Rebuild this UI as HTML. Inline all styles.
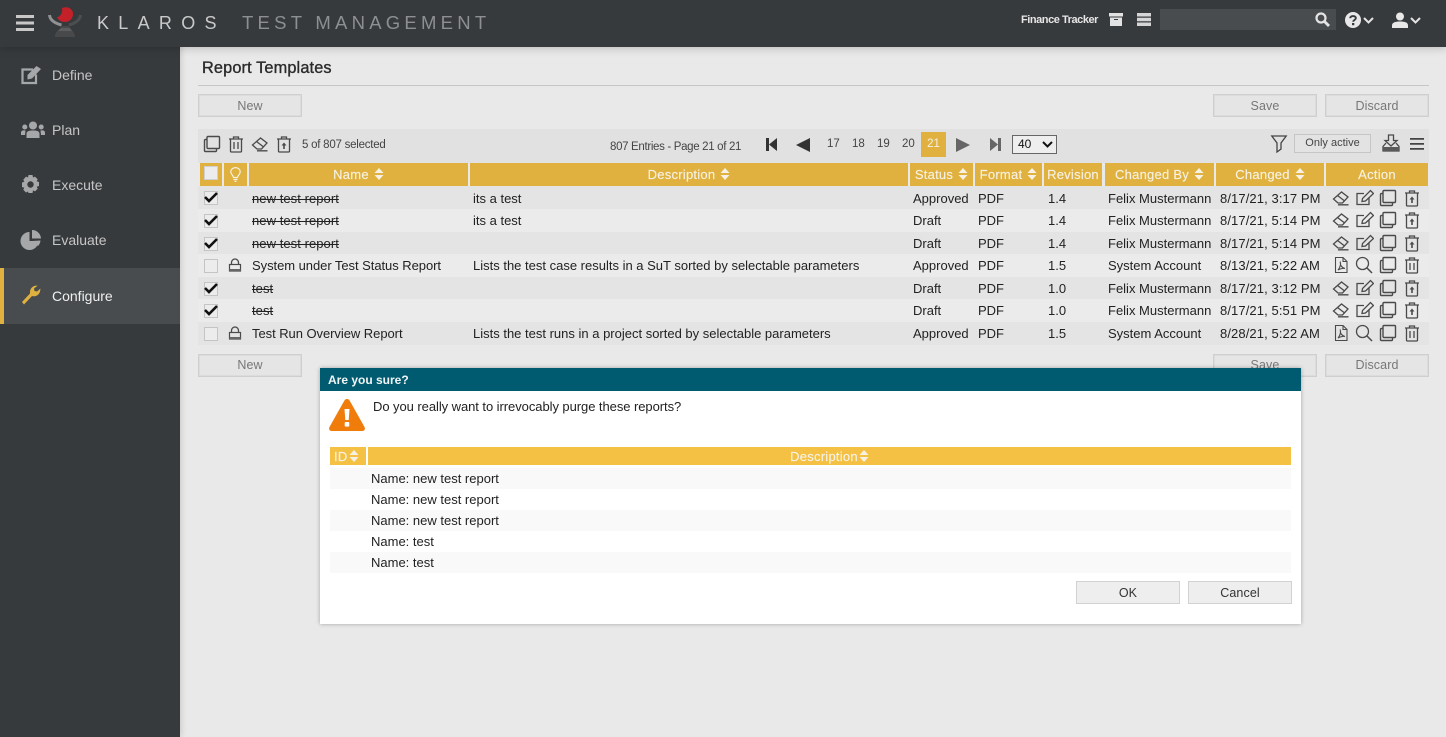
<!DOCTYPE html>
<html lang="en"><head><meta charset="utf-8"><title>Report Templates</title>
<style>
*{box-sizing:border-box}
html,body{margin:0;padding:0;width:1446px;height:737px;overflow:hidden;background:#e9e9e9;font-family:"Liberation Sans",sans-serif;font-size:13px;color:#222}
.a{position:absolute;white-space:nowrap}
svg.a{overflow:visible}
.side{font-size:14px;color:#c6c6c6;left:52px;line-height:18px}
.btn{position:absolute;width:104px;height:23px;background:#e5e5e5;border:1px solid #cfcfcf;color:#777;text-align:center;line-height:22px;font-size:12.5px;letter-spacing:.1px;box-shadow:inset 0 0 0 1px #dcdcdc}
.hd{position:absolute;top:163px;height:23px;background:#e0b13e;color:#f6f1e2;font-size:13px;line-height:23px;text-align:center;letter-spacing:.25px;white-space:nowrap;-webkit-text-stroke:.15px #f6f1e2}
.sort{display:inline-block;width:10px;height:12px;margin-left:5px;vertical-align:-1px}
.r{position:absolute;left:198px;width:1231px;height:23px;line-height:23px;white-space:nowrap}
.d{background:#e4e4e4}.l{background:#ebebeb}
.r span{position:absolute;top:0;letter-spacing:0}
.r1 span{top:1px}
.r .n{left:54px;letter-spacing:-.05px}.de{left:275px}.st{left:715px}.fo{left:780px}.re{left:850px}.cb{left:910px}.r .ch{left:1022px;letter-spacing:.1px}
.r .s{text-decoration:line-through;text-decoration-thickness:1px;letter-spacing:.06px}
.box{position:absolute;left:6px;top:5px;width:14px;height:14px;border:1px solid #c4c4c4;background:#ececec}
.r svg{position:absolute;top:2px;width:18px;height:18px;fill:none}
.r1 svg{top:3px}
.r svg.k{left:6px;top:5px;width:14px;height:14px}
.r svg.lock{left:30px;top:4px;width:14px;height:14px}
.pg{position:absolute;top:137px;font-size:11.5px;color:#444;line-height:14px}
.dr{position:absolute;left:330px;width:962px;height:21px;line-height:21px;padding-left:41px;font-size:13px}
</style></head><body>
<svg width="0" height="0" style="position:absolute"><defs>
<symbol id="er" viewBox="0 0 18 18"><path d="M1.500 10 9.500 3 16 8 10.500 14H6Z M5.500 6.500 12 11.500 M6 15.800H16.500" fill="none" stroke="#4a4a4a" stroke-width="1.300"/></symbol>
<symbol id="ed" viewBox="0 0 18 18"><path d="M8 4.500H1V15.500H13V9 M6 12.500 6.500 9.500 14.500 1.500 17.500 4.500 9.500 12Z" fill="none" stroke="#4a4a4a" stroke-width="1.300"/></symbol>
<symbol id="co" viewBox="0 0 18 18"><path d="M5 1.500H15.500A1 1 0 0 1 16.500 2.500V12.500A1 1 0 0 1 15.500 13.500H5A1 1 0 0 1 4 12.500V2.500A1 1 0 0 1 5 1.500Z M4 4.500H2.500A1 1 0 0 0 1.500 5.500V15.500A1 1 0 0 0 2.500 16.500H12.500A1 1 0 0 0 13.500 15.500V13.500" fill="none" stroke="#4a4a4a" stroke-width="1.400"/></symbol>
<symbol id="up" viewBox="0 0 18 18"><path d="M3.500 4.500V16A1 1 0 0 0 4.500 17H13.500A1 1 0 0 0 14.500 16V4.500 M2 4H16 M6.500 4V2H11.500V4" fill="none" stroke="#4a4a4a" stroke-width="1.300"/><path d="M9 7.500 11.500 10.500H9.800V14H8.200V10.500H6.500Z" fill="#4a4a4a"/></symbol>
<symbol id="tr" viewBox="0 0 18 18"><path d="M3.500 4.500V16A1 1 0 0 0 4.500 17H13.500A1 1 0 0 0 14.500 16V4.500 M2 4H16 M6.500 4V2H11.500V4 M7 7V14 M11 7V14" fill="none" stroke="#4a4a4a" stroke-width="1.300"/></symbol>
<symbol id="pd" viewBox="0 0 18 18"><path d="M3.500 1.500H11L15 5.500V16.500H3.500Z M11 1.500V5.500H15 M6 14C8 12 9 8 8.300 6.500C8 9 10 12 13 12.500C10.500 12 8 13 6 14Z" fill="none" stroke="#4a4a4a" stroke-width="1.100"/></symbol>
<symbol id="se" viewBox="0 0 18 18"><circle cx="7.500" cy="7.500" r="6" fill="none" stroke="#4a4a4a" stroke-width="1.300"/><path d="M12 12 17 17" fill="none" stroke="#4a4a4a" stroke-width="1.500"/></symbol>
<symbol id="ck" viewBox="0 0 14 14"><path d="M1 6 5 10 13 2" fill="none" stroke="#111" stroke-width="2.600"/></symbol>
<symbol id="lk" viewBox="0 0 14 14"><path d="M3.500 7V4.500A3.500 3.500 0 0 1 10.500 4.500V7" fill="none" stroke="#4a4a4a" stroke-width="1.300"/><rect x="1.500" y="6.500" width="11" height="6.500" fill="none" stroke="#4a4a4a" stroke-width="1.200"/><rect x="1.500" y="11" width="11" height="2" fill="#666"/></symbol>
<symbol id="so" viewBox="0 0 9 12"><path d="M4.500 0 9 5H0ZM0 7H9L4.500 12Z" fill="#f6f1e2"/></symbol>
</defs></svg>

<!-- header -->
<div class="a" style="left:0;top:0;width:1446px;height:47px;background:#373a3d;box-shadow:0 2px 8px rgba(0,0,0,.18);z-index:2"></div>
<div style="position:absolute;left:0;top:0;width:1446px;height:47px;z-index:3">
<svg class="a" style="left:16px;top:15px" width="18" height="16"><path d="M0 0h18v3H0zM0 6.500h18v3H0zM0 13h18v3H0z" fill="#c8c8c8"/></svg>
<svg class="a" style="left:40px;top:0" width="60" height="47" viewBox="0 0 60 47">
<path d="M9.500 15C10 20 14 23 21.500 25" fill="none" stroke="#8f9192" stroke-width="3"/><path d="M40.500 15C40 20 36 23 29 25" fill="none" stroke="#4c4e50" stroke-width="3"/>
<path d="M22 26H29C30 30 35 31 35 37H15C15 31 20 30 22 26Z" fill="#48494b"/><path d="M21 28H30L32 31H18Z" fill="#5c5e60"/>
<path d="M22 8C27 6 33 8 33 14C33 19 29 22 25 22C21 22 18 20 17 17C20 17 23 13 22 8Z" fill="#c3202a"/></svg>
<div class="a" style="left:97px;top:12px;font-size:18px;line-height:22px;color:#c9c9c9;letter-spacing:9.300px">KLAROS</div>
<div class="a" style="left:242px;top:12px;font-size:18.500px;line-height:22px;color:#8d8f90;letter-spacing:4.250px">TEST MANAGEMENT</div>
<div class="a" style="left:1021px;top:13px;font-size:11px;line-height:14px;color:#e6e6e6;font-weight:bold;letter-spacing:-.45px">Finance Tracker</div>
<svg class="a" style="left:1109px;top:13px" width="14" height="13"><path d="M0 0h14v3.500H0zM1 4.500h12V13H1z" fill="#e2e2e2"/><path d="M5 6.500h4" stroke="#373a3d"/></svg>
<svg class="a" style="left:1137px;top:13px" width="14" height="13"><path d="M0 0h14v3.500H0zM0 4.700h14v3.600H0zM0 9.500h14V13H0z" fill="#d5d5d5"/></svg>
<div class="a" style="left:1160px;top:9px;width:176px;height:21px;background:#484c4f"></div>
<svg class="a" style="left:1315px;top:12px" width="15" height="15"><circle cx="6" cy="6" r="4.500" fill="none" stroke="#e4e4e4" stroke-width="2.200"/><path d="M9.500 9.500 14 14" stroke="#e4e4e4" stroke-width="2.800"/></svg>
<svg class="a" style="left:1345px;top:12px" width="16" height="16"><circle cx="8" cy="8" r="8" fill="#e8e8e8"/><path d="M5.200 6.200C5.400 3.300 10.800 3.300 10.800 6.200C10.800 8 8.200 8 8.200 9.700" fill="none" stroke="#373a3d" stroke-width="1.900"/><rect x="7" y="11" width="2.300" height="2.200" fill="#373a3d"/></svg>
<svg class="a" style="left:1363px;top:17px" width="11" height="7"><path d="M1 1 5.500 5.500 10 1" fill="none" stroke="#e4e4e4" stroke-width="2"/></svg>
<svg class="a" style="left:1392px;top:12px" width="16" height="16"><circle cx="8" cy="4.500" r="4" fill="#e8e8e8"/><path d="M0 16V13.500C0 10.500 3 9.500 8 9.500S16 10.500 16 13.500V16Z" fill="#e8e8e8"/></svg>
<svg class="a" style="left:1410px;top:17px" width="11" height="7"><path d="M1 1 5.500 5.500 10 1" fill="none" stroke="#e4e4e4" stroke-width="2"/></svg>
</div>

<!-- sidebar -->
<div class="a" style="left:0;top:0;width:180px;height:737px;background:#373a3d;box-shadow:1px 0 6px rgba(0,0,0,.15);z-index:1"></div>
<div style="position:absolute;left:0;top:0;width:180px;height:737px;z-index:3">
<div class="a" style="left:0;top:268px;width:180px;height:56px;background:#484c4e;border-left:4px solid #e0b13e"></div>
<svg class="a" style="left:21px;top:65px" width="22" height="20"><path d="M15 9.500V18H1.500V4.500H12" fill="none" stroke="#a6a7a9" stroke-width="2.200"/><path d="M6.500 10 15.500 1 20 4 11 13.500 6.500 14.500Z" fill="#a6a7a9"/></svg>
<svg class="a" style="left:21px;top:121px" width="24" height="18" viewBox="0 0 24 18"><circle cx="12" cy="4.500" r="4" fill="#a6a7a9"/><circle cx="3.800" cy="6" r="2.500" fill="#a6a7a9"/><circle cx="20.200" cy="6" r="2.500" fill="#a6a7a9"/><path d="M5.500 17V13C5.500 10 8 9.500 12 9.500S18.500 10 18.500 13V17ZM0 14V11.500C0 9.500 2 9 4.500 9.500L4 14ZM24 14V11.500C24 9.500 22 9 19.500 9.500L20 14Z" fill="#a6a7a9"/></svg>
<svg class="a" style="left:21px;top:175px" width="19" height="19" viewBox="0 0 19 19"><path fill-rule="evenodd" d="M7.500 0h4l.5 2.500 2-.9 2.700 2.700-1 2 2.300.7v4l-2.300.7 1 2-2.700 2.700-2-1-.5 2.600h-4L7 16.500l-2 1-2.700-2.700 1-2L1 12V7.500l2.300-.7-1-2L5 1.600l2 .9ZM9.500 6.300a3.200 3.200 0 1 0 .01 0Z" fill="#a6a7a9"/></svg>
<svg class="a" style="left:21px;top:230px" width="20" height="20" viewBox="0 0 20 20"><path d="M9 1.500V10.500H18A9 9 0 1 1 9 1.500Z" fill="#a6a7a9" transform="translate(-.5 .5)"/><path d="M11 0A9 9 0 0 1 20 8.500H11Z" fill="#a6a7a9"/><path d="M11 11 19.500 10.500A9 9 0 0 1 17 16Z" fill="#a6a7a9"/></svg>
<svg class="a" style="left:21px;top:285px" width="20" height="20" viewBox="0 0 20 20"><path d="M1 17 3 19.500 11 11C14 12 18 10.500 19 6.500L19.500 3.500 16 6.500 13.500 6 13 3.500 16.500.7C12 .3 8.500 3.500 9 8.500Z" fill="#e0b13e"/></svg>
<div class="a side" style="top:66px">Define</div>
<div class="a side" style="top:121px">Plan</div>
<div class="a side" style="top:176px">Execute</div>
<div class="a side" style="top:231px">Evaluate</div>
<div class="a side" style="top:287px;color:#f0f0f0">Configure</div>
</div>

<!-- main -->
<div class="a" style="left:202px;top:58px;font-size:16.300px;line-height:20px;color:#2b2b2b;-webkit-text-stroke:.35px #2b2b2b;letter-spacing:.15px">Report Templates</div>
<div class="a" style="left:198px;top:85px;width:1231px;height:1px;background:#c6c6c6"></div>
<div class="btn" style="left:198px;top:94px">New</div>
<div class="btn" style="left:1213px;top:94px">Save</div>
<div class="btn" style="left:1325px;top:94px">Discard</div>
<div class="btn" style="left:198px;top:354px;line-height:21px">New</div>
<div class="btn" style="left:1213px;top:354px;line-height:21px">Save</div>
<div class="btn" style="left:1325px;top:354px;line-height:21px">Discard</div>

<!-- toolbar -->
<div class="a" style="left:198px;top:129px;width:1231px;height:34px;background:#e1e1e1"></div>
<svg class="a" style="left:203px;top:135px" width="18" height="18"><use href="#co"/></svg>
<svg class="a" style="left:227px;top:135px" width="18" height="18"><use href="#tr"/></svg>
<svg class="a" style="left:251px;top:135px" width="18" height="18"><use href="#er"/></svg>
<svg class="a" style="left:275px;top:135px" width="18" height="18"><use href="#up"/></svg>
<div class="pg" style="left:302px;top:138px;letter-spacing:-.24px">5 of 807 selected</div>
<div class="pg" style="left:610px;top:140px;letter-spacing:-.33px">807 Entries - Page 21 of 21</div>
<svg class="a" style="left:766px;top:138px" width="11" height="13"><path d="M0 0h3v13H0zM11 0v13L3 6.500z" fill="#333"/></svg>
<svg class="a" style="left:796px;top:138px" width="14" height="14"><path d="M14 0v14L0 7z" fill="#333"/></svg>
<div class="pg" style="left:827px;top:137px">17</div><div class="pg" style="left:852px;top:137px">18</div>
<div class="pg" style="left:877px;top:137px">19</div><div class="pg" style="left:902px;top:137px">20</div>
<div class="a" style="left:921px;top:132px;width:25px;height:25px;background:#e0b13e;color:#f6f1e2;text-align:center;font-size:11.500px;line-height:24px">21</div>
<svg class="a" style="left:956px;top:138px" width="14" height="14"><path d="M0 0v14L14 7z" fill="#666"/></svg>
<svg class="a" style="left:990px;top:138px" width="11" height="13"><path d="M0 0v13L8 6.500zM8 0h3v13H8z" fill="#666"/></svg>
<div class="a" style="left:1012px;top:135px;width:45px;height:19px;border:1px solid #666;background:#eee;font-size:12px;line-height:17px;padding-left:5px;color:#111">40</div>
<svg class="a" style="left:1042px;top:141px" width="11" height="7"><path d="M1 1 5.500 5.500 10 1" fill="none" stroke="#111" stroke-width="2"/></svg>
<svg class="a" style="left:1271px;top:135px" width="16" height="18"><path d="M.8 1H15.200L10 8V14L6 17V8Z" fill="none" stroke="#444" stroke-width="1.300"/></svg>
<div class="a" style="left:1294px;top:134px;width:77px;height:19px;border:1px solid #c6c6c6;background:#e3e3e3;font-size:11px;line-height:17px;text-align:center;color:#444">Only active</div>
<svg class="a" style="left:1382px;top:134px" width="18" height="18"><path d="M6.500 1H11.500V6.500H15L9 12 3 6.500H6.500Z M4 9 1 12.500V17H17V12.500L14 9" fill="none" stroke="#4a4a4a" stroke-width="1.300"/><rect x="1" y="13" width="16" height="4" fill="#5a5a5a"/></svg>
<svg class="a" style="left:1410px;top:138px" width="14" height="12"><path d="M0 0h14v1.700H0zM0 5h14v1.700H0zM0 10h14v1.700H0z" fill="#444"/></svg>

<!-- table head -->
<div class="hd" style="left:200px;width:22px"><div class="a" style="left:4px;top:3px;width:14px;height:14px;background:#ececec;border:1px solid #d0d0d0"></div></div>
<div class="hd" style="left:224px;width:23px"><svg class="a" style="left:6px;top:4px" width="11" height="15"><path d="M3.500 10.500C3 8 .8 7.500.8 4.800A4.700 4.200 0 0 1 10.200 4.800C10.200 7.500 8 8 7.500 10.500ZM3.500 12.500H7.500M4.500 14.300H6.500" fill="none" stroke="#f6f1e2" stroke-width="1.200"/></svg></div>
<div class="hd" style="left:249px;width:219px">Name<svg class="sort"><use href="#so"/></svg></div>
<div class="hd" style="left:470px;width:438px">Description<svg class="sort"><use href="#so"/></svg></div>
<div class="hd" style="left:910px;width:63px">Status<svg class="sort"><use href="#so"/></svg></div>
<div class="hd" style="left:975px;width:67px">Format<svg class="sort"><use href="#so"/></svg></div>
<div class="hd" style="left:1044px;width:58px">Revision</div>
<div class="hd" style="left:1105px;width:109px">Changed By<svg class="sort"><use href="#so"/></svg></div>
<div class="hd" style="left:1216px;width:108px">Changed<svg class="sort"><use href="#so"/></svg></div>
<div class="hd" style="left:1326px;width:102px">Action</div>

<!-- rows -->
<div class="r d r1" style="top:186px"><i class="box"></i><svg class="k"><use href="#ck"/></svg><span class="n s">new test report</span><span class="de">its a test</span><span class="st">Approved</span><span class="fo">PDF</span><span class="re">1.4</span><span class="cb">Felix Mustermann</span><span class="ch">8/17/21, 3:17 PM</span>
<svg style="left:1134px"><use href="#er"/></svg><svg style="left:1158px"><use href="#ed"/></svg><svg style="left:1181px"><use href="#co"/></svg><svg style="left:1205px"><use href="#up"/></svg></div>
<div class="r l" style="top:209px"><i class="box"></i><svg class="k"><use href="#ck"/></svg><span class="n s">new test report</span><span class="de">its a test</span><span class="st">Draft</span><span class="fo">PDF</span><span class="re">1.4</span><span class="cb">Felix Mustermann</span><span class="ch">8/17/21, 5:14 PM</span>
<svg style="left:1134px"><use href="#er"/></svg><svg style="left:1158px"><use href="#ed"/></svg><svg style="left:1181px"><use href="#co"/></svg><svg style="left:1205px"><use href="#up"/></svg></div>
<div class="r d" style="top:232px"><i class="box"></i><svg class="k"><use href="#ck"/></svg><span class="n s">new test report</span><span class="st">Draft</span><span class="fo">PDF</span><span class="re">1.4</span><span class="cb">Felix Mustermann</span><span class="ch">8/17/21, 5:14 PM</span>
<svg style="left:1134px"><use href="#er"/></svg><svg style="left:1158px"><use href="#ed"/></svg><svg style="left:1181px"><use href="#co"/></svg><svg style="left:1205px"><use href="#up"/></svg></div>
<div class="r l" style="top:254px"><i class="box"></i><svg class="lock"><use href="#lk"/></svg><span class="n">System under Test Status Report</span><span class="de">Lists the test case results in a SuT sorted by selectable parameters</span><span class="st">Approved</span><span class="fo">PDF</span><span class="re">1.5</span><span class="cb">System Account</span><span class="ch">8/13/21, 5:22 AM</span>
<svg style="left:1134px"><use href="#pd"/></svg><svg style="left:1157px"><use href="#se"/></svg><svg style="left:1181px"><use href="#co"/></svg><svg style="left:1205px"><use href="#tr"/></svg></div>
<div class="r d" style="top:277px"><i class="box"></i><svg class="k"><use href="#ck"/></svg><span class="n s">test</span><span class="st">Draft</span><span class="fo">PDF</span><span class="re">1.0</span><span class="cb">Felix Mustermann</span><span class="ch">8/17/21, 3:12 PM</span>
<svg style="left:1134px"><use href="#er"/></svg><svg style="left:1158px"><use href="#ed"/></svg><svg style="left:1181px"><use href="#co"/></svg><svg style="left:1205px"><use href="#up"/></svg></div>
<div class="r l" style="top:299px"><i class="box"></i><svg class="k"><use href="#ck"/></svg><span class="n s">test</span><span class="st">Draft</span><span class="fo">PDF</span><span class="re">1.0</span><span class="cb">Felix Mustermann</span><span class="ch">8/17/21, 5:51 PM</span>
<svg style="left:1134px"><use href="#er"/></svg><svg style="left:1158px"><use href="#ed"/></svg><svg style="left:1181px"><use href="#co"/></svg><svg style="left:1205px"><use href="#up"/></svg></div>
<div class="r d" style="top:322px"><i class="box"></i><svg class="lock"><use href="#lk"/></svg><span class="n">Test Run Overview Report</span><span class="de">Lists the test runs in a project sorted by selectable parameters</span><span class="st">Approved</span><span class="fo">PDF</span><span class="re">1.5</span><span class="cb">System Account</span><span class="ch">8/28/21, 5:22 AM</span>
<svg style="left:1134px"><use href="#pd"/></svg><svg style="left:1157px"><use href="#se"/></svg><svg style="left:1181px"><use href="#co"/></svg><svg style="left:1205px"><use href="#tr"/></svg></div>

<!-- dialog -->
<div class="a" style="left:320px;top:368px;width:981px;height:256px;background:#fff;box-shadow:0 0 4px rgba(0,0,0,.3)"></div>
<div class="a" style="left:320px;top:368px;width:981px;height:23px;background:#005b70;color:#f2f5f6;font-size:12px;font-weight:bold;line-height:24px;padding-left:8px">Are you sure?</div>
<svg class="a" style="left:329px;top:399px" width="36" height="32" viewBox="0 0 36 32"><path d="M18 0C19.500 0 20.300 1 21 2.200L35.500 28C36.500 30 35.500 32 33.500 32H2.500C.5 32-.5 30 .5 28L15 2.200C15.700 1 16.500 0 18 0Z" fill="#f07c0c"/><path d="M15.500 10H20.500L19.700 21H16.300Z" fill="#fff"/><rect x="15.700" y="23" width="4.600" height="4.600" rx="1" fill="#fff"/></svg>
<div class="a" style="left:373px;top:399px;line-height:16px;font-size:13px;color:#222;letter-spacing:-.06px">Do you really want to irrevocably purge these reports?</div>
<div class="hd" style="left:330px;top:447px;width:36px;height:18px;line-height:19px;background:#f4c145;z-index:1;text-align:left;padding-left:4px">ID<svg class="sort" style="margin-left:1px"><use href="#so"/></svg></div>
<div class="hd" style="left:368px;top:447px;width:923px;height:18px;line-height:19px;background:#f4c145;z-index:1">Description<svg class="sort" style="margin-left:1px"><use href="#so"/></svg></div>
<div class="dr" style="top:468px;background:#f9f9f9;width:961px">Name: new test report</div>
<div class="dr" style="top:489px">Name: new test report</div>
<div class="dr" style="top:510px;background:#f9f9f9;width:961px">Name: new test report</div>
<div class="dr" style="top:531px">Name: test</div>
<div class="dr" style="top:552px;background:#f9f9f9;width:961px">Name: test</div>
<div class="btn" style="left:1076px;top:581px;background:#eee;color:#333;box-shadow:none;border-color:#d2d2d2">OK</div>
<div class="btn" style="left:1188px;top:581px;background:#eee;color:#333;box-shadow:none;border-color:#d2d2d2">Cancel</div>
</body></html>
